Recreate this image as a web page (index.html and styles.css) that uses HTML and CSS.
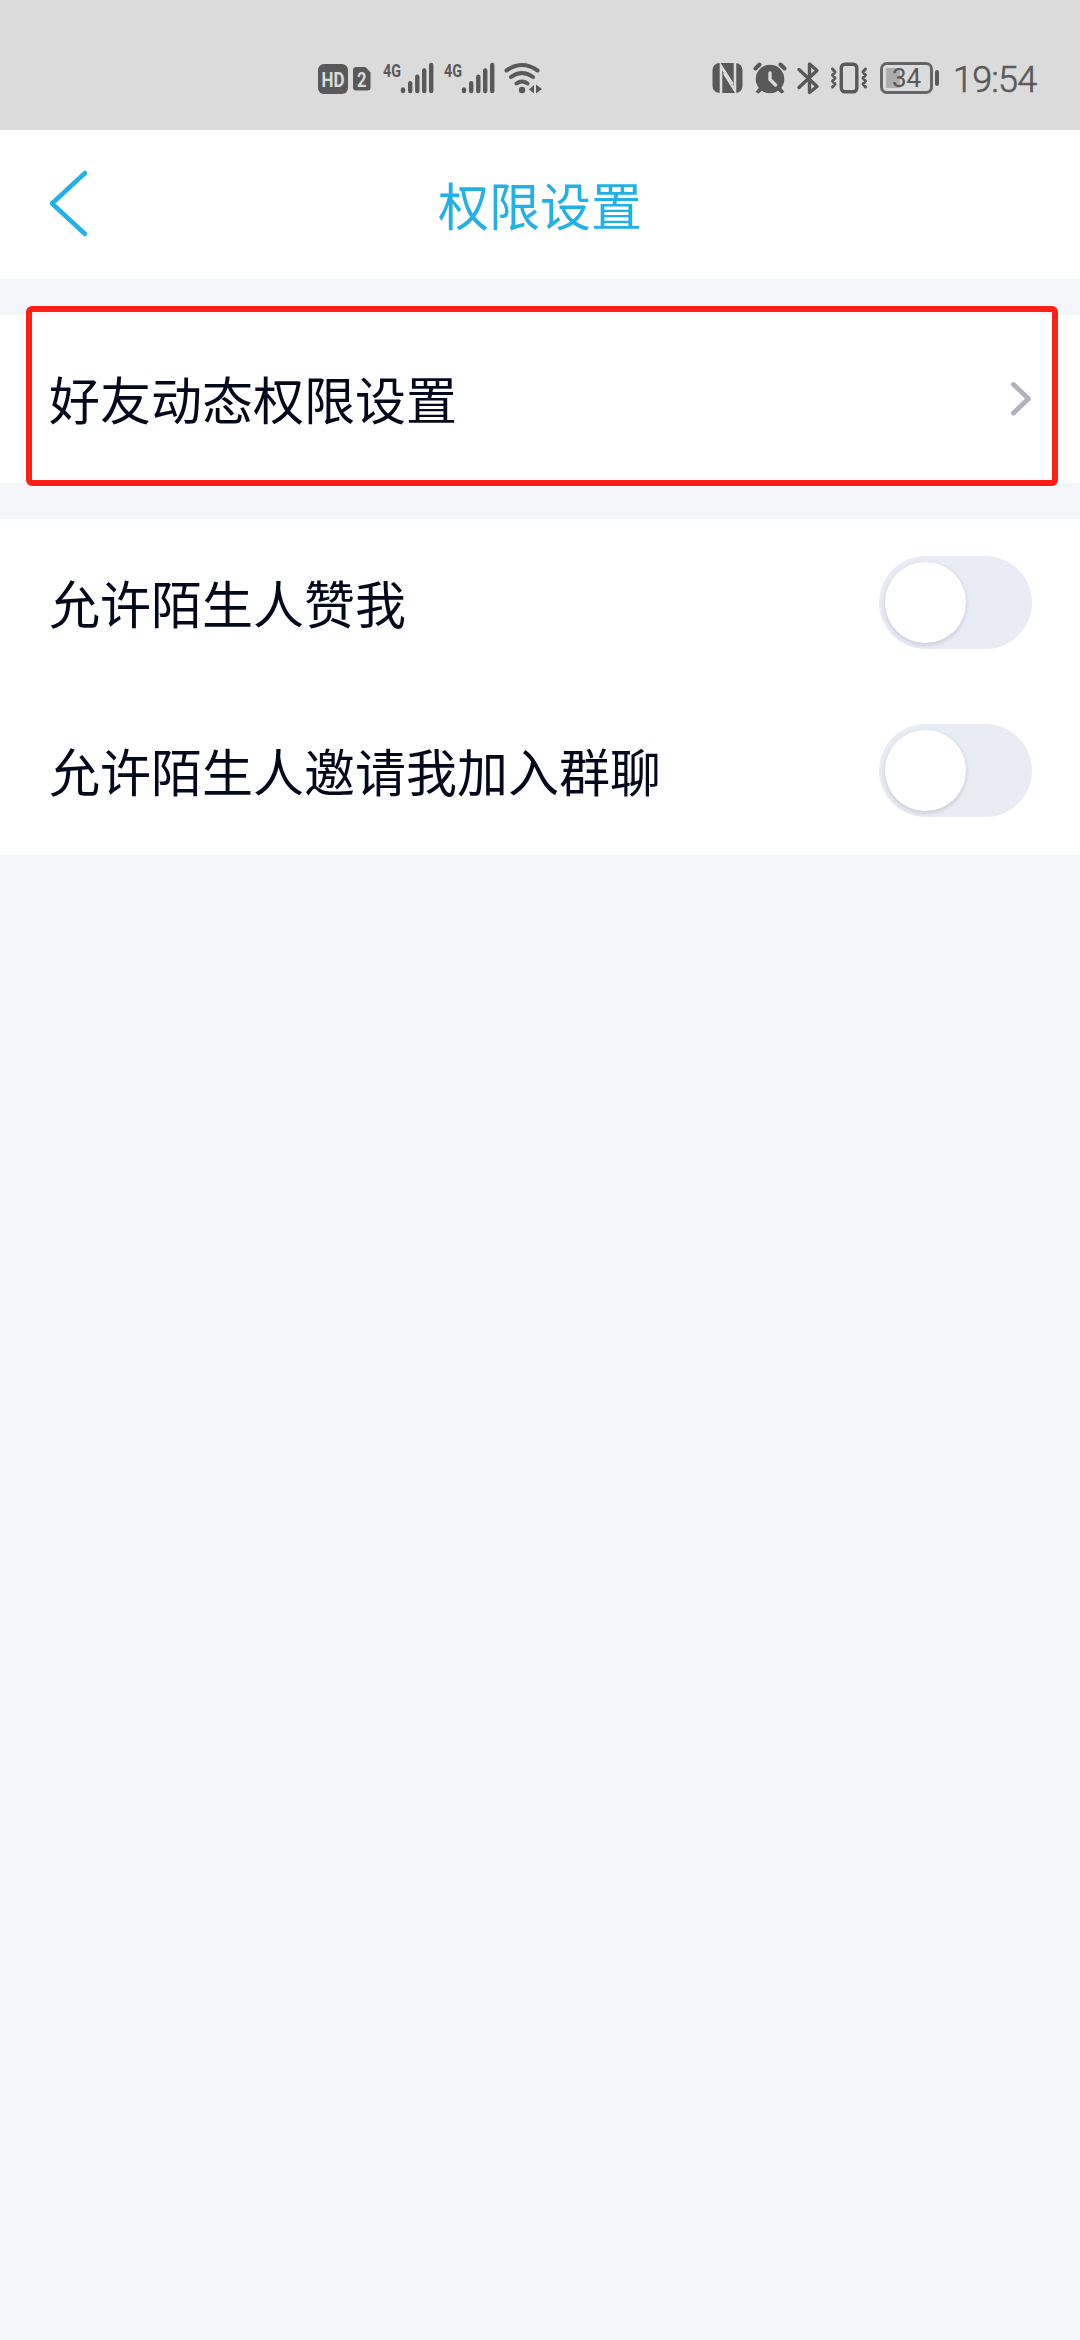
FILE: index.html
```html
<!DOCTYPE html>
<html lang="zh-CN">
<head>
<meta charset="utf-8">
<title>权限设置</title>
<link rel="stylesheet" href="styles.css">
</head>
<body>
<header class="status">
  <svg class="status-left" width="230" height="40" viewBox="315 58 230 40">
    <rect class="solid" x="318" y="64" width="30" height="30" rx="6"/>
    <text class="cutout" x="321.5" y="86.5" font-size="20" textLength="23" lengthAdjust="spacingAndGlyphs">HD</text>
    <path class="solid" d="M356 67h9.500l5 5.500V87.500a3 3 0 0 1-3 3H356a3 3 0 0 1-3-3V70a3 3 0 0 1 3-3z"/>
    <text class="cutout" x="357" y="86.500" font-size="21" textLength="9.500" lengthAdjust="spacingAndGlyphs">2</text>
    <text class="network" x="383" y="76.500" textLength="18" lengthAdjust="spacingAndGlyphs">4G</text>
    <path class="bars" d="M403 89.500v1.500M410.200 83.200V91M417.300 76.800V91M424.200 70.500V91M431.200 65V91"/>
    <text class="network" x="444" y="76.500" textLength="18" lengthAdjust="spacingAndGlyphs">4G</text>
    <path class="bars" d="M464 89.500v1.500M471.200 83.200V91M478.300 76.800V91M485.200 70.500V91M492.200 65V91"/>
    <path class="wifi" d="M506.500 70.500Q522 59.500 537.500 70.500M511 77Q522 69 533 77M516.500 83.500Q522 79.500 527.500 83.500"/>
    <circle class="solid" cx="522" cy="90" r="3.200"/>
    <path class="solid" d="M529 89.500l5-4.500v8.500zM542 89l-6-4.500v9z"/>
  </svg>
  <div class="status-right">
    <svg width="169" height="40" viewBox="710 58 169 40">
      <rect class="solid" x="712.500" y="63" width="30" height="30" rx="7"/>
      <path class="gap" d="M721 93V66L732.500 84M724 73L735 90.500V62.500"/>
      <circle class="solid" cx="770" cy="79" r="14.300"/>
      <path class="solid" d="M759.500 87l-4 5 3 1.500 5-4zM780.500 87l4 5-3 1.500-5-4z"/>
      <path class="line thick" d="M755.500 68.500l4-4M784.500 68.500l-4-4"/>
      <path class="hand" d="M770 73v6.500l5.500 5.500"/>
      <path class="line" d="M799 69.500L817 86.500 809.500 92.500V64L817 70.500 799 87.500"/>
      <rect class="line" x="841.300" y="64.300" width="15.500" height="27.500" rx="3.500"/>
      <path class="line wave" d="M832.500 69l2.500 3-2.500 3 2.500 3-2.500 3 2.500 3-2.500 3M865.500 69l-2.500 3 2.500 3-2.500 3 2.500 3-2.500 3 2.500 3"/>
    </svg>
    <div class="battery">34</div>
    <time class="clock">19:54</time>
  </div>
</header>

<nav class="nav">
  <svg class="back" width="41" height="69" viewBox="0 0 41 69"><path d="M37 4L4 34.500L37 65"/></svg>
  <h1 class="title">权限设置</h1>
</nav>

<main>
  <section class="group">
    <div class="row">
      <span class="label">好友动态权限设置</span>
      <svg class="chevron" width="22" height="36" viewBox="0 0 22 36"><path d="M3.500 3.500L18.500 17.700L3.500 32"/></svg>
      <div class="highlight"></div>
    </div>
  </section>
  <section class="group">
    <div class="row">
      <span class="label">允许陌生人赞我</span>
      <span class="toggle"><span class="knob"></span></span>
    </div>
    <div class="row">
      <span class="label">允许陌生人邀请我加入群聊</span>
      <span class="toggle"><span class="knob"></span></span>
    </div>
  </section>
</main>
</body>
</html>
```

FILE: styles.css
```css
* { box-sizing: border-box; }
body {
  margin: 0;
  min-height: 2340px;
  background: #f4f6fa;
  color: #03081a;
  font-family: "Noto Sans CJK SC", sans-serif;
}
svg { display: block; flex: none; }

.status {
  height: 130px;
  padding: 58px 0 0 315px;
  display: flex;
  align-items: flex-start;
  background: #dbdbdb;
}
.status-left { margin-right: 165px; }
.status-right { display: flex; }
.solid { fill: #595959; }
.cutout { fill: #dbdbdb; font-family: Roboto, sans-serif; font-weight: 700; }
.network { fill: #595959; font-family: Roboto, sans-serif; font-weight: 700; font-size: 19px; }
.bars { stroke: #595959; stroke-width: 4.4; stroke-linecap: round; }
.wifi { fill: none; stroke: #595959; stroke-width: 4; stroke-linecap: round; }
.line { fill: none; stroke: #595959; stroke-width: 3.4; stroke-linejoin: round; stroke-linecap: round; }
.thick { stroke-width: 4; }
.wave { stroke-width: 3; }
.gap { fill: none; stroke: #dbdbdb; stroke-width: 2.6; }
.hand { fill: none; stroke: #dbdbdb; stroke-width: 3.4; stroke-linecap: round; }
.battery {
  position: relative;
  width: 53px;
  height: 32px;
  margin: 4px 0 0 1px;
  border: 3px solid #666;
  border-radius: 7px;
  background: linear-gradient(#adadad, #adadad) 3px 3px / 14px 20px no-repeat;
  color: #595959;
  font: 400 26px/27px Roboto, sans-serif;
  text-align: center;
}
.battery::after {
  content: "";
  position: absolute;
  left: 52px;
  top: 5px;
  width: 4px;
  height: 16px;
  border-radius: 2px;
  background: #595959;
}
.clock {
  margin: 1px 0 0 20px;
  color: #595959;
  font: 300 36px/43px Roboto, sans-serif;
  -webkit-text-stroke: 0.6px #595959;
  letter-spacing: -0.8px;
}

.nav {
  height: 149px;
  display: grid;
  grid-template-columns: 1fr auto 1fr;
  align-items: center;
  padding: 0 48px;
  background: #fff;
}
.back { margin-bottom: 3px; }
.back path { fill: none; stroke: #22b1e6; stroke-width: 4.5; stroke-linecap: round; stroke-linejoin: round; }
.title { margin: 0; color: #22b1e6; font-size: 51px; line-height: 75px; font-weight: 400; }

.group { margin-top: 36px; background: #fff; }
.row {
  position: relative;
  height: 168px;
  padding: 0 48px 1px 49px;
  display: flex;
  align-items: center;
  justify-content: space-between;
}
.label { font-size: 51px; line-height: 75px; }
.chevron path { fill: none; stroke: #b2b2bf; stroke-width: 4.8; stroke-linecap: round; stroke-linejoin: round; }
.highlight {
  position: absolute;
  inset: -9px 22px -3px 26px;
  border: 6px solid #ff1f14;
  border-radius: 6px;
}
.toggle {
  width: 153px;
  height: 93px;
  margin-bottom: 1px;
  padding: 6px;
  border-radius: 47px;
  background: #eaecf5;
  overflow: hidden;
}
.knob {
  display: block;
  width: 81px;
  height: 81px;
  border-radius: 50%;
  background: #fff;
  box-shadow: 0 2px 5px rgba(90, 90, 130, .25);
}
```
